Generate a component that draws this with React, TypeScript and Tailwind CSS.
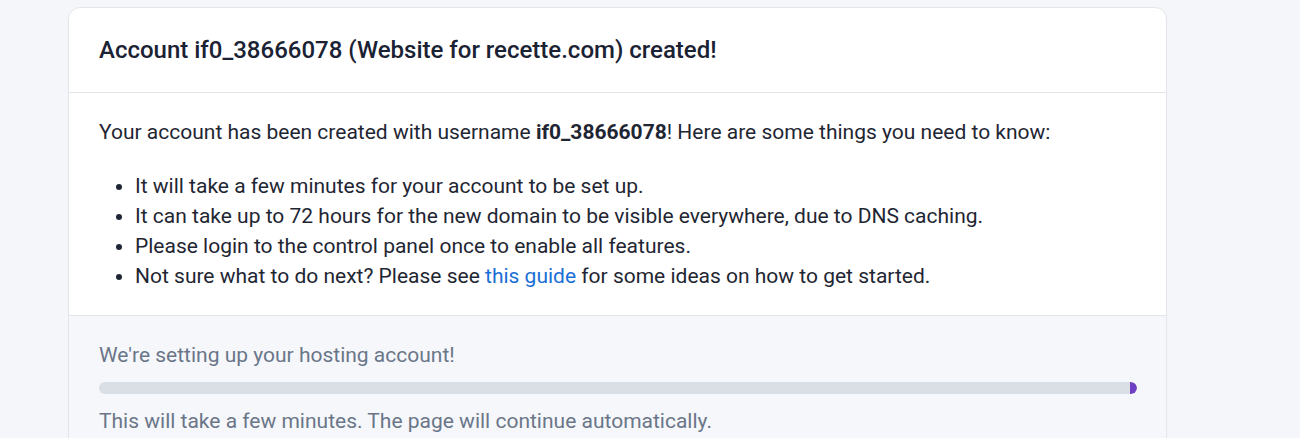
export default function App() {
  return (
    <div className="min-h-screen bg-[#f5f6fa] pt-[7px] font-['Roboto',sans-serif]">
      <div className="ml-[68px] w-[1099px] overflow-hidden rounded-t-[12px] border border-[#e3e5ea] bg-white">
        <div className="border-b border-[#e3e5ea] px-[30px] py-[24px]">
          <h1 className="text-[24px] font-medium leading-[36px] text-[#1a2233]">
            Account if0_38666078 (Website for recette.com) created!
          </h1>
        </div>
        <div className="border-b border-[#e3e5ea] px-[30px] py-[24px] text-[21px] leading-[30px] text-[#1f2633]">
          <p>
            Your account has been created with username <strong className="font-bold">if0_38666078</strong>! Here are some things you need to know:
          </p>
          <ul className="mt-[24px] list-disc pl-9">
            <li>It will take a few minutes for your account to be set up.</li>
            <li>It can take up to 72 hours for the new domain to be visible everywhere, due to DNS caching.</li>
            <li>Please login to the control panel once to enable all features.</li>
            <li>
              Not sure what to do next? Please see <a className="text-[#1a6fd6]" href="#">this guide</a> for some ideas on how to get started.
            </li>
          </ul>
        </div>
        <div className="bg-[#f6f7fb] pl-[30px] pr-[29px] py-[24px] text-[21px] leading-[30px] text-[#6a7688]">
          <p>We're setting up your hosting account!</p>
          <div className="my-[12px] flex h-[12px] w-full justify-end overflow-hidden rounded-full bg-[#dadee5]">
            <div className="h-full w-[7px] rounded-r-full bg-[#6f3fc6]" />
          </div>
          <p>This will take a few minutes. The page will continue automatically.</p>
        </div>
      </div>
    </div>
  );
}
